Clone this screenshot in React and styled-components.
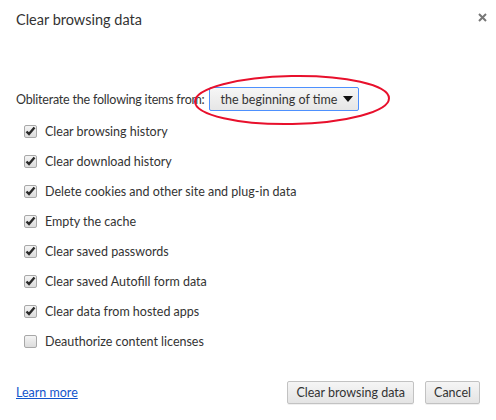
import React from 'react'
import styled, {createGlobalStyle} from 'styled-components'

const GlobalStyle = createGlobalStyle`
    html, body {
        margin: 0;
        background: #fff;
    }
    body {
        font-family: Lato, "Open Sans", sans-serif;
        color: #333;
    }
`

const items = [
    {label: 'Clear browsing history', checked: true},
    {label: 'Clear download history', checked: true},
    {label: 'Delete cookies and other site and plug-in data', checked: true},
    {label: 'Empty the cache', checked: true},
    {label: 'Clear saved passwords', checked: true},
    {label: 'Clear saved Autofill form data', checked: true},
    {label: 'Clear data from hosted apps', checked: true},
    {label: 'Deauthorize content licenses', checked: false},
]

export default function App(){
    return(
        <Dialog>
            <GlobalStyle/>
            <Header>
                <Title>Clear browsing data</Title>
                <Close>
                    <svg width="9" height="9" viewBox="0 0 9 9">
                        <path d="M1 1L8 8M8 1L1 8" stroke="#777" strokeWidth="2"/>
                    </svg>
                </Close>
            </Header>
            <Body>
                <FromRow>
                    <Label>Obliterate the following items from:</Label>
                    <SelectWrap>
                        <Select>
                            the beginning of time
                            <Arrow/>
                        </Select>
                        <Ring viewBox="0 0 198 52" width="198" height="52">
                            <ellipse cx="99" cy="26" rx="97" ry="24" fill="none" stroke="#e8102c" strokeWidth="2" transform="rotate(-1 99 26)"/>
                        </Ring>
                    </SelectWrap>
                </FromRow>
                <List>
                    {items.map(item =>
                        <Item key={item.label}>
                            <Box>
                                {item.checked &&
                                    <svg width="11" height="10" viewBox="0 0 11 10">
                                        <path d="M1.5 5.5L4 8L9.5 1.5" fill="none" stroke="#2a2a2a" strokeWidth="2.4"/>
                                    </svg>}
                            </Box>
                            {item.label}
                        </Item>)}
                </List>
            </Body>
            <Footer>
                <Link href="#">Learn more</Link>
                <Buttons>
                    <Button>Clear browsing data</Button>
                    <Button>Cancel</Button>
                </Buttons>
            </Footer>
        </Dialog>
    )
}

const Dialog = styled.div`
    width: 496px;
    height: 420px;
    box-sizing: border-box;
    display: flex;
    flex-direction: column;
    font-size: 12.5px;
`

const Header = styled.div`
    display: flex;
    justify-content: space-between;
    align-items: flex-start;
    padding: 9px 7px 0 16px;
    height: 44px;
`

const Title = styled.div`
    font-size: 14.5px;
    color: #333;
    margin-top: 2px;
`

const Close = styled.div`
    padding: 2px;
    margin-top: -1px;
`

const Body = styled.div`
    padding: 34px 16px 0;
    flex: 1;
`

const FromRow = styled.div`
    display: flex;
    align-items: center;
    gap: 4px;
`

const Label = styled.span`
    letter-spacing: -0.2px;
`

const SelectWrap = styled.div`
    position: relative;
`

const Select = styled.div`
    display: flex;
    align-items: center;
    justify-content: space-between;
    box-sizing: border-box;
    width: 150px;
    height: 24px;
    padding: 0 5px 0 11px;
    border: 1px solid #4d90fe;
    border-radius: 2px;
    background: linear-gradient(#f6f6f6, #e6e6e6);
    color: #333;
`

const Arrow = styled.span`
    width: 0;
    height: 0;
    border-left: 5px solid transparent;
    border-right: 5px solid transparent;
    border-top: 6px solid #111;
`

const Ring = styled.svg`
    position: absolute;
    left: -16px;
    top: -13px;
    pointer-events: none;
`

const List = styled.div`
    display: flex;
    flex-direction: column;
    margin-top: 5px;
    padding-left: 8px;
`

const Item = styled.label`
    display: flex;
    align-items: center;
    gap: 8px;
    height: 30px;
    color: #333;
`

const Box = styled.span`
    display: grid;
    place-items: center;
    box-sizing: border-box;
    width: 13px;
    height: 13px;
    border: 1px solid #a8a8a8;
    border-radius: 2px;
    background: linear-gradient(#f4f4f4, #dcdcdc);
`

const Footer = styled.div`
    display: flex;
    justify-content: space-between;
    align-items: center;
    padding: 0 16px 16px;
`

const Link = styled.a`
    color: #15c;
    text-decoration: underline;
`

const Buttons = styled.div`
    display: flex;
    gap: 11px;
`

const Button = styled.button`
    font-family: inherit;
    font-size: 12.5px;
    color: #333;
    height: 23px;
    padding: 0 8px;
    border: 1px solid #c2c2c2;
    border-radius: 2px;
    background: linear-gradient(#f5f5f5, #e4e4e4);
    box-shadow: 0 1px 0 rgba(0,0,0,0.06);
`
